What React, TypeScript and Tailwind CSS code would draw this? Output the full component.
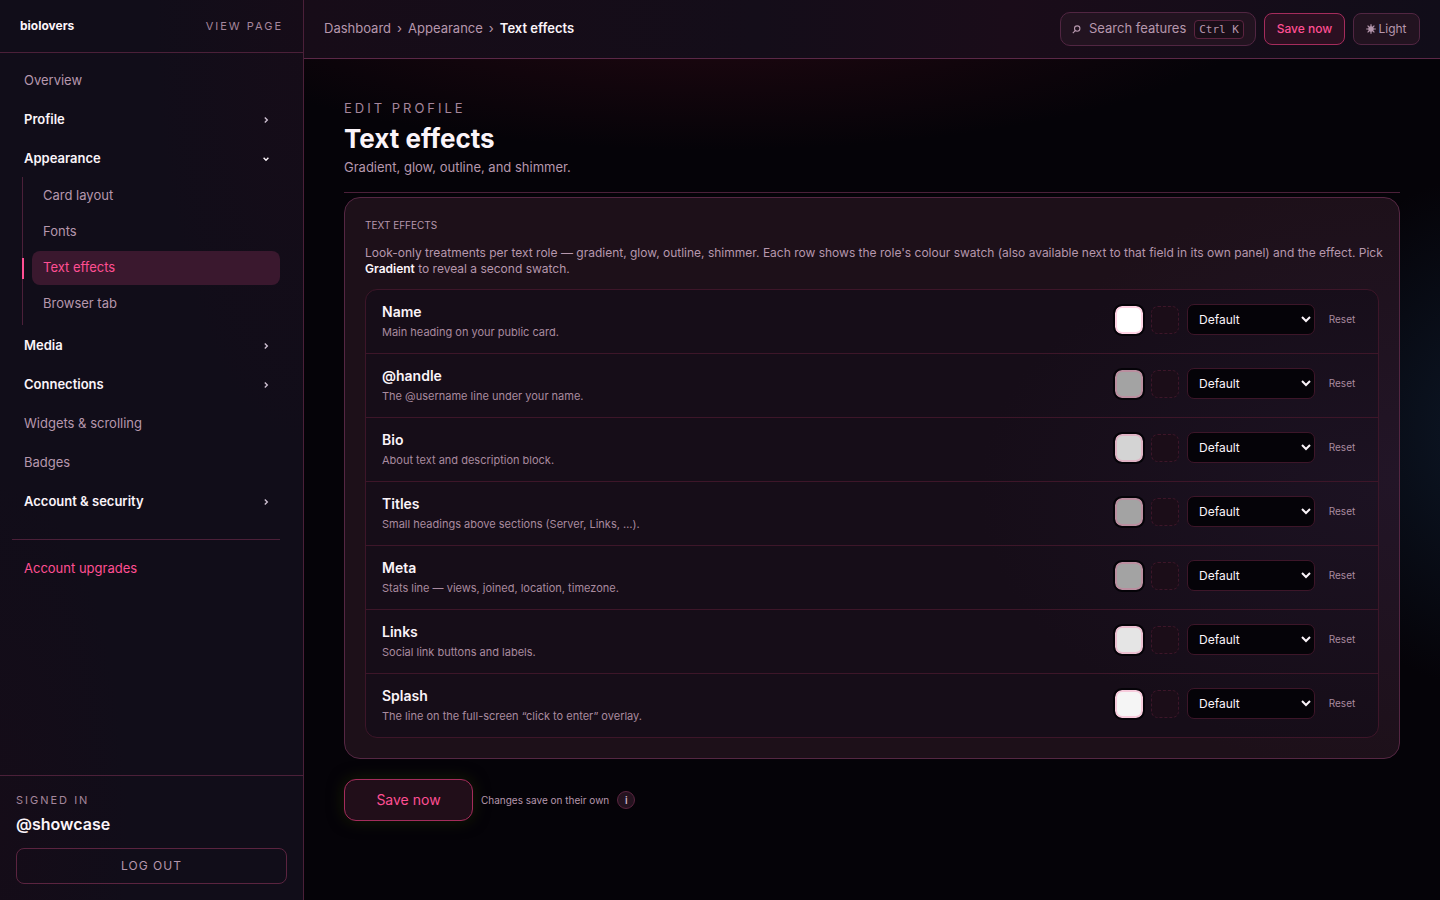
import clsx from "clsx";

type NavItem = {
  label: string;
  group?: boolean;
  children?: string[];
};

type EffectRow = {
  id: string;
  name: string;
  hint: string;
  color: string;
};

const NAV_ITEMS: NavItem[] = [
  { label: "Overview" },
  { label: "Profile", group: true },
  {
    label: "Appearance",
    group: true,
    children: ["Card layout", "Fonts", "Text effects", "Browser tab"],
  },
  { label: "Media", group: true },
  { label: "Connections", group: true },
  { label: "Widgets & scrolling" },
  { label: "Badges" },
  { label: "Account & security", group: true },
];

const ACTIVE_PAGE = "Text effects";

const EFFECT_ROWS: EffectRow[] = [
  { id: "name", name: "Name", hint: "Main heading on your public card.", color: "#ffffff" },
  { id: "handle", name: "@handle", hint: "The @username line under your name.", color: "#a3a3a3" },
  { id: "bio", name: "Bio", hint: "About text and description block.", color: "#d4d4d4" },
  { id: "titles", name: "Titles", hint: "Small headings above sections (Server, Links, …).", color: "#a3a3a3" },
  { id: "meta", name: "Meta", hint: "Stats line — views, joined, location, timezone.", color: "#a3a3a3" },
  { id: "links", name: "Links", hint: "Social link buttons and labels.", color: "#e5e5e5" },
  { id: "splash", name: "Splash", hint: "The line on the full-screen “click to enter” overlay.", color: "#f5f5f5" },
];

function Chevron({ open }: { open?: boolean }) {
  return (
    <svg
      viewBox="0 0 6 6"
      className={clsx("h-[6px] w-[6px]", open ? "rotate-90 text-[#fbf4f9]" : "text-[#cdbfd0]")}
      fill="none"
      stroke="currentColor"
      strokeWidth="1.4"
    >
      <path d="M1.8 0.6 4.3 3 1.8 5.4" />
    </svg>
  );
}

function SearchIcon() {
  return (
    <svg viewBox="0 0 9 9" className="h-[9px] w-[9px]" fill="none" stroke="currentColor" strokeWidth="1.1">
      <circle cx="5.2" cy="3.6" r="2.7" />
      <path d="M3.3 5.6 0.8 8.2" />
    </svg>
  );
}

function SunIcon() {
  return (
    <svg viewBox="0 0 10 10" className="h-[10px] w-[10px]" stroke="currentColor" strokeWidth="1.2">
      <circle cx="5" cy="5" r="2.7" fill="currentColor" stroke="none" />
      <path d="M5 0.2v9.6M0.2 5h9.6M1.6 1.6l6.8 6.8M8.4 1.6 1.6 8.4" />
    </svg>
  );
}

function SubNav({ items }: { items: string[] }) {
  return (
    <ul className="ml-[10px] flex flex-col gap-[2px] border-l border-[#4b2039] pt-[2px] pb-1 pl-[9px]">
      {items.map((label) => {
        const active = label === ACTIVE_PAGE;
        return (
          <li key={label} className="relative">
            {active && <span className="absolute top-[7px] -left-[10px] h-[21px] w-[2px] bg-[#ff4f93]" />}
            <a
              href="#"
              aria-current={active ? "page" : undefined}
              className={clsx(
                "flex h-[34px] items-center rounded-lg px-[11px]",
                active ? "bg-[#3a182e] text-[#ff4f93]" : "text-[#b697ad]"
              )}
            >
              {label}
            </a>
          </li>
        );
      })}
    </ul>
  );
}

function Sidebar() {
  return (
    <aside className="sticky top-0 flex h-screen w-[304px] shrink-0 flex-col border-r border-[#4b2039] bg-[radial-gradient(ellipse_at_100%_0%,#160c18_0%,transparent_35%),radial-gradient(ellipse_at_0%_92%,#150c18_0%,transparent_30%)] bg-[#110d19]">
      <div className="flex h-[53px] items-center justify-between border-b border-[#4b2039] px-5">
        <a href="#" className="text-xs font-bold text-[#fbf4f9]">
          biolovers
        </a>
        <a href="#" className="text-[11px] tracking-[2px] text-[#a5869c]">
          VIEW PAGE
        </a>
      </div>

      <nav className="flex flex-1 flex-col overflow-hidden pt-[9px] pr-[23px] pl-3 text-[13px]">
        <ul className="flex flex-col gap-[2px]">
          {NAV_ITEMS.map((item) => (
            <li key={item.label}>
              {item.group ? (
                <button
                  type="button"
                  aria-expanded={Boolean(item.children)}
                  className="flex h-[37px] w-full items-center justify-between pr-[11px] pl-3 font-semibold text-[#fbf4f9]"
                >
                  {item.label}
                  <Chevron open={Boolean(item.children)} />
                </button>
              ) : (
                <a href="#" className="flex h-[37px] items-center px-3 text-[#b697ad]">
                  {item.label}
                </a>
              )}
              {item.children && <SubNav items={item.children} />}
            </li>
          ))}
        </ul>
        <hr className="mt-[19px] mb-[10px] border-[#4b2039]" />
        <a href="#" className="flex h-[37px] items-center px-3 text-[#ff4f93]">
          Account upgrades
        </a>
      </nav>

      <div className="border-t border-[#4b2039] p-4">
        <p className="text-[11px] leading-4 tracking-[2px] text-[#a5869c]">SIGNED IN</p>
        <p className="mt-1 text-base leading-6 font-semibold text-[#fbf4f9]">@showcase</p>
        <button
          type="button"
          className="mt-3 h-9 w-full rounded-lg border border-[#5b2440] text-xs tracking-[1px] text-[#b697ad]"
        >
          LOG OUT
        </button>
      </div>
    </aside>
  );
}

function TopBar() {
  return (
    <header className="flex h-[59px] items-center justify-between border-b border-[#5b2847] bg-[linear-gradient(90deg,#170c18_0%,#140d19_40%,#1a0c19_62%,#110d19_100%)] px-5 text-[13px]">
      <nav aria-label="Breadcrumb">
        <ol className="flex items-center gap-[6px] text-[#b697ad]">
          <li>
            <a href="#">Dashboard</a>
          </li>
          <li aria-hidden="true">›</li>
          <li>
            <a href="#">Appearance</a>
          </li>
          <li aria-hidden="true">›</li>
          <li className="font-semibold text-[#fbf4f9]">Text effects</li>
        </ol>
      </nav>

      <div className="flex items-center gap-2 text-[#b697ad]">
        <button
          type="button"
          className="flex h-[34px] w-[196px] items-center justify-between rounded-[10px] border border-[#512642] bg-[#221320] px-[11px]"
        >
          <SearchIcon />
          <span>Search features</span>
          <kbd className="rounded border border-[#5b2440] bg-[#1a0e18] px-1 font-['DejaVu_Sans_Mono',monospace] text-[11px] leading-[17px]">
            Ctrl K
          </kbd>
        </button>
        <button
          type="button"
          className="h-8 w-[81px] rounded-lg border border-[#a52c5c] bg-[#2b1021] text-xs font-medium text-[#ff4f93]"
        >
          Save now
        </button>
        <button
          type="button"
          className="flex h-8 w-[67px] items-center justify-center gap-[2px] rounded-lg border border-[#512642] bg-[#221320] text-xs"
        >
          <SunIcon />
          Light
        </button>
      </div>
    </header>
  );
}

function EffectRowItem({ row }: { row: EffectRow }) {
  return (
    <li className="flex h-16 items-center justify-between border-b border-[#3d1629] pr-[17px] pl-4 last:h-[63px] last:border-b-0">
      <div>
        <h3 className="text-sm leading-5 font-semibold text-[#fbf4f9]">{row.name}</h3>
        <p className="text-[11px] leading-5 text-[#a98a9f]">{row.hint}</p>
      </div>
      <div className="flex items-center gap-2 pb-1">
        <input
          type="color"
          aria-label={`${row.name} colour`}
          defaultValue={row.color}
          className="h-7 w-7 rounded-[7px] bg-transparent p-0 shadow-[0_0_0_2px_#050308] [&::-webkit-color-swatch]:rounded-[7px] [&::-webkit-color-swatch]:border-2 [&::-webkit-color-swatch]:border-[#ff4f9340] [&::-webkit-color-swatch-wrapper]:p-0"
        />
        <span className="h-7 w-7 rounded-[7px] border border-dashed border-[#3d1629] bg-[#1b0d18]" />
        <select
          aria-label={`${row.name} effect`}
          defaultValue="Default"
          className="h-[31px] w-32 rounded-[7px] border border-[#3d1629] bg-[#050308] pr-[5px] pl-[7px] text-xs text-[#fbf4f9]"
        >
          <option>Default</option>
          <option>Gradient</option>
          <option>Glow</option>
          <option>Outline</option>
          <option>Shimmer</option>
        </select>
        <button type="button" className="w-[38px] text-[10px] text-[#a98a9f]">
          Reset
        </button>
      </div>
    </li>
  );
}

export default function App() {
  return (
    <div className="flex min-h-screen bg-[#050308] font-[Inter,sans-serif] text-[#fbf4f9]">
      <Sidebar />
      <div className="flex min-w-0 flex-1 flex-col bg-[radial-gradient(ellipse_560px_150px_at_36%_0%,#240812_0%,transparent_100%),radial-gradient(ellipse_240px_260px_at_106%_48%,#0d1828_0%,transparent_100%)]">
        <TopBar />
        <main className="flex-1 px-10 pt-10 pb-10">
          <div className="border-b border-[#4b2039] pb-[15px]">
            <p className="text-[13px] leading-[18px] tracking-[3px] text-[#a5869c]">EDIT PROFILE</p>
            <h1 className="mt-1 text-[26px] leading-9 font-bold">Text effects</h1>
            <p className="text-[13px] leading-5 text-[#b697ad]">Gradient, glow, outline, and shimmer.</p>
          </div>

          <section className="mt-1 rounded-2xl border border-[#552743] bg-[radial-gradient(ellipse_400px_300px_at_100%_50%,#221527_0%,transparent_100%)] bg-[#1d1019] p-5">
            <h2 className="text-[10px] leading-[14px] text-[#b697ad]">TEXT EFFECTS</h2>
            <p className="mt-[13px] -mr-2 text-xs leading-4 text-[#b697ad]">
              Look-only treatments per text role — gradient, glow, outline, shimmer. Each row shows the role's colour
              swatch (also available next to that field in its own panel) and the effect. Pick{" "}
              <strong className="font-semibold text-[#fbf4f9]">Gradient</strong> to reveal a second swatch.
            </p>
            <ul className="mt-3 rounded-xl border border-[#3d1629] bg-[radial-gradient(ellipse_400px_260px_at_100%_45%,#1c1222_0%,transparent_100%)] bg-[#160d18]">
              {EFFECT_ROWS.map((row) => (
                <EffectRowItem key={row.id} row={row} />
              ))}
            </ul>
          </section>

          <div className="mt-5 flex items-center gap-2">
            <button
              type="button"
              className="h-[42px] w-[129px] rounded-xl border border-[#a52c5c] bg-[#210e19] text-sm text-[#ff4f93] shadow-[0_0_16px_#161c04]"
            >
              Save now
            </button>
            <span className="text-[10px] text-[#b697ad]">Changes save on their own</span>
            <button
              type="button"
              aria-label="About saving"
              className="h-[18px] w-[18px] rounded-full border border-[#5b2440] bg-[#24131f] text-[10px] leading-none font-semibold text-[#cdb3c5]"
            >
              i
            </button>
          </div>
        </main>
      </div>
    </div>
  );
}
